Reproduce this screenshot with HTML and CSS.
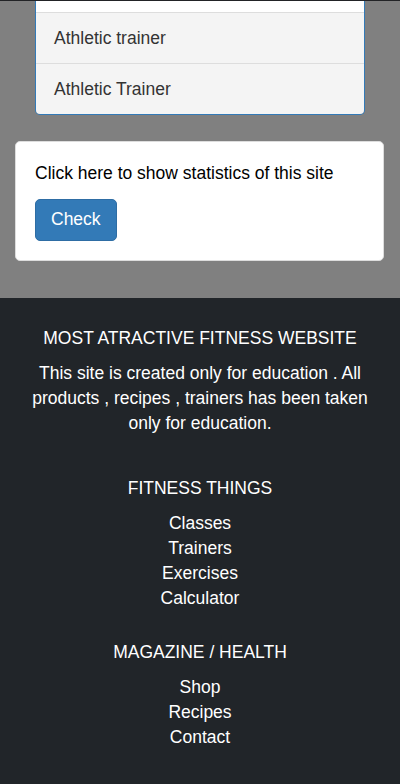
FILE: index.html
```html
<!DOCTYPE html>
<html lang="en">
<head>
<meta charset="utf-8">
<title>Fitness</title>
<link rel="stylesheet" href="styles.css">
</head>
<body>
<div class="topbar"></div>
<main class="main">
  <ul class="suggest">
    <li class="suggest-blank"></li>
    <li class="suggest-item">Athletic trainer</li>
    <li class="suggest-item">Athletic Trainer</li>
  </ul>
  <section class="panel">
    <p class="panel-text">Click here to show statistics of this site</p>
    <button class="btn" type="button">Check</button>
  </section>
</main>
<footer class="footer">
  <h5 class="footer-title">MOST ATRACTIVE FITNESS WEBSITE</h5>
  <p class="footer-text">This site is created only for education . All products , recipes , trainers has been taken only for education.</p>
  <h5 class="footer-title footer-title-2">FITNESS THINGS</h5>
  <ul class="footer-links">
    <li>Classes</li>
    <li>Trainers</li>
    <li>Exercises</li>
    <li>Calculator</li>
  </ul>
  <h5 class="footer-title footer-title-3">MAGAZINE / HEALTH</h5>
  <ul class="footer-links">
    <li>Shop</li>
    <li>Recipes</li>
    <li>Contact</li>
  </ul>
</footer>
</body>
</html>
```
FILE: styles.css
```css
* { box-sizing: border-box; }
html, body { margin: 0; padding: 0; }
body {
  background: #808080;
  font-family: "Liberation Sans", Arial, sans-serif;
  font-size: 17.5px;
  line-height: 25px;
}
.topbar { height: 1px; background: #222326; }
.main { padding-bottom: 37px; }
.suggest {
  list-style: none;
  margin: 0 35px 0 35px;
  padding: 0;
  border: 1px solid #337ab7;
  border-top: none;
  border-radius: 0 0 5px 5px;
  overflow: hidden;
}
.suggest-blank {
  height: 12px;
  background: #fff;
  border-bottom: 1px solid #ddd;
}
.suggest-item {
  background: #f4f4f4;
  color: #333;
  padding: 12.5px 18px;
  border-bottom: 1px solid #ddd;
}
.suggest-item:last-child { border-bottom: none; }
.panel {
  margin: 26px 16px 0 15px;
  background: #fff;
  border: 1px solid #ddd;
  border-radius: 5px;
  padding: 19px 19px 19px;
}
.panel-text { margin: 0 0 12.5px; color: #000; }
.btn {
  display: block;
  height: 42.5px;
  padding: 0 15px;
  background: #337ab7;
  border: 1px solid #2e6da4;
  border-radius: 5px;
  color: #fff;
  font-family: inherit;
  font-size: 17.5px;
  line-height: 25px;
}
.footer {
  background: #212529;
  color: #fff;
  text-align: center;
  padding: 28px 15px 35px;
}
.footer-title {
  margin: 0 0 10px;
  font-size: 17.5px;
  font-weight: normal;
  line-height: 25px;
}
.footer-title-2 { margin-top: 40px; }
.footer-title-3 { margin-top: 28.5px; }
.footer-text { margin: 0; }
.footer-links { list-style: none; margin: 0; padding: 0; }
```
